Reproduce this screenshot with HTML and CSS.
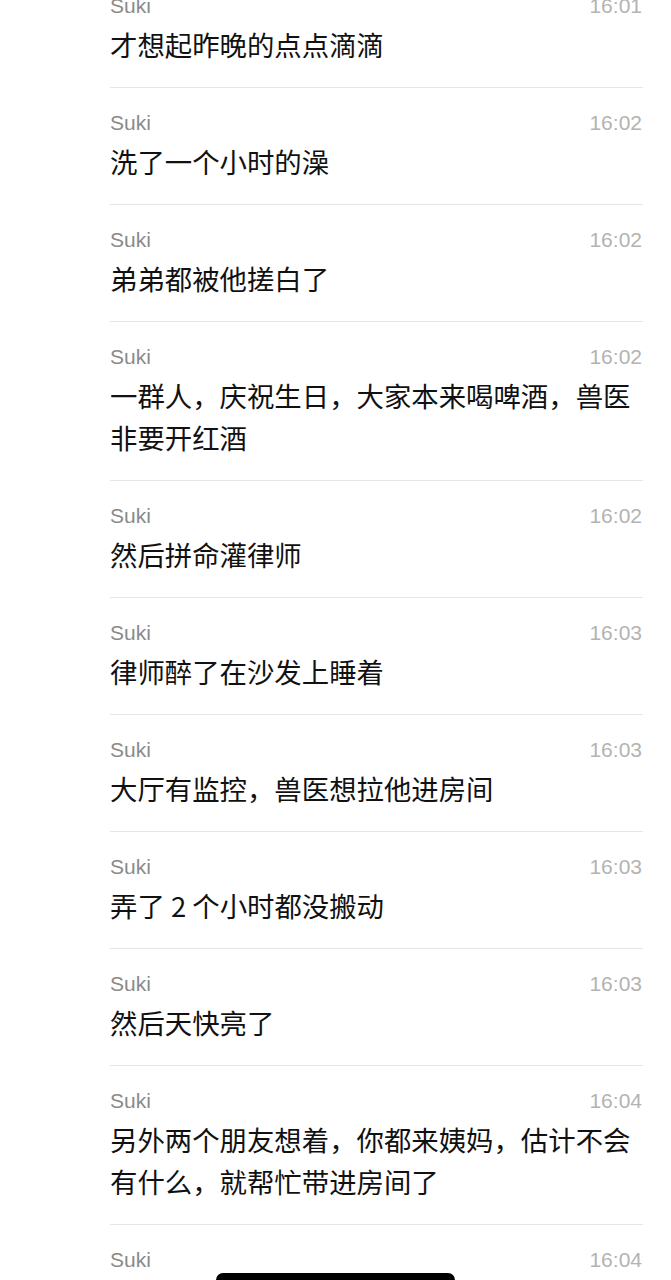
FILE: index.html
```html
<!DOCTYPE html>
<html lang="zh">
<head>
<meta charset="utf-8">
<title>Suki</title>
<link rel="stylesheet" href="styles.css">
</head>
<body>
<div class="list">
  <div class="row first">
    <div class="head"><span class="name">Suki</span><span class="time">16:01</span></div>
    <div class="msg">才想起昨晚的点点滴滴</div>
  </div>
  <div class="row">
    <div class="head"><span class="name">Suki</span><span class="time">16:02</span></div>
    <div class="msg">洗了一个小时的澡</div>
  </div>
  <div class="row">
    <div class="head"><span class="name">Suki</span><span class="time">16:02</span></div>
    <div class="msg">弟弟都被他搓白了</div>
  </div>
  <div class="row">
    <div class="head"><span class="name">Suki</span><span class="time">16:02</span></div>
    <div class="msg">一群人，庆祝生日，大家本来喝啤酒，兽医非要开红酒</div>
  </div>
  <div class="row">
    <div class="head"><span class="name">Suki</span><span class="time">16:02</span></div>
    <div class="msg">然后拼命灌律师</div>
  </div>
  <div class="row">
    <div class="head"><span class="name">Suki</span><span class="time">16:03</span></div>
    <div class="msg">律师醉了在沙发上睡着</div>
  </div>
  <div class="row">
    <div class="head"><span class="name">Suki</span><span class="time">16:03</span></div>
    <div class="msg">大厅有监控，兽医想拉他进房间</div>
  </div>
  <div class="row">
    <div class="head"><span class="name">Suki</span><span class="time">16:03</span></div>
    <div class="msg">弄了 2 个小时都没搬动</div>
  </div>
  <div class="row">
    <div class="head"><span class="name">Suki</span><span class="time">16:03</span></div>
    <div class="msg">然后天快亮了</div>
  </div>
  <div class="row">
    <div class="head"><span class="name">Suki</span><span class="time">16:04</span></div>
    <div class="msg">另外两个朋友想着，你都来姨妈，估计不会有什么，就帮忙带进房间了</div>
  </div>
  <div class="row">
    <div class="head"><span class="name">Suki</span><span class="time">16:04</span></div>
    <div class="msg">&nbsp;</div>
  </div>
</div>
<div class="home-indicator"></div>
</body>
</html>
```

FILE: styles.css
```css
html, body {
  margin: 0;
  padding: 0;
  background: #ffffff;
}
body {
  height: 1280px;
  overflow: hidden;
  font-family: "Noto Sans CJK SC", "Liberation Sans", sans-serif;
}
.list {
  margin-top: -30px;
  padding-left: 110px;
  padding-right: 28px;
}
.row {
  border-top: 1px solid #e6e6e6;
  padding: 18px 0 22px;
}
.row.first {
  border-top-color: transparent;
}
.head {
  display: flex;
  justify-content: space-between;
  align-items: center;
  height: 34px;
  font-family: "Liberation Sans", "Noto Sans CJK SC", sans-serif;
  font-size: 21px;
}
.name {
  color: #8a8a8a;
}
.time {
  color: #b3b3b3;
  padding-right: 1px;
}
.msg {
  font-size: 27.4px;
  line-height: 42px;
  color: #111111;
}
.home-indicator {
  position: fixed;
  left: 216px;
  top: 1273px;
  width: 239px;
  height: 14px;
  border-radius: 7px;
  background: #000000;
}
```
